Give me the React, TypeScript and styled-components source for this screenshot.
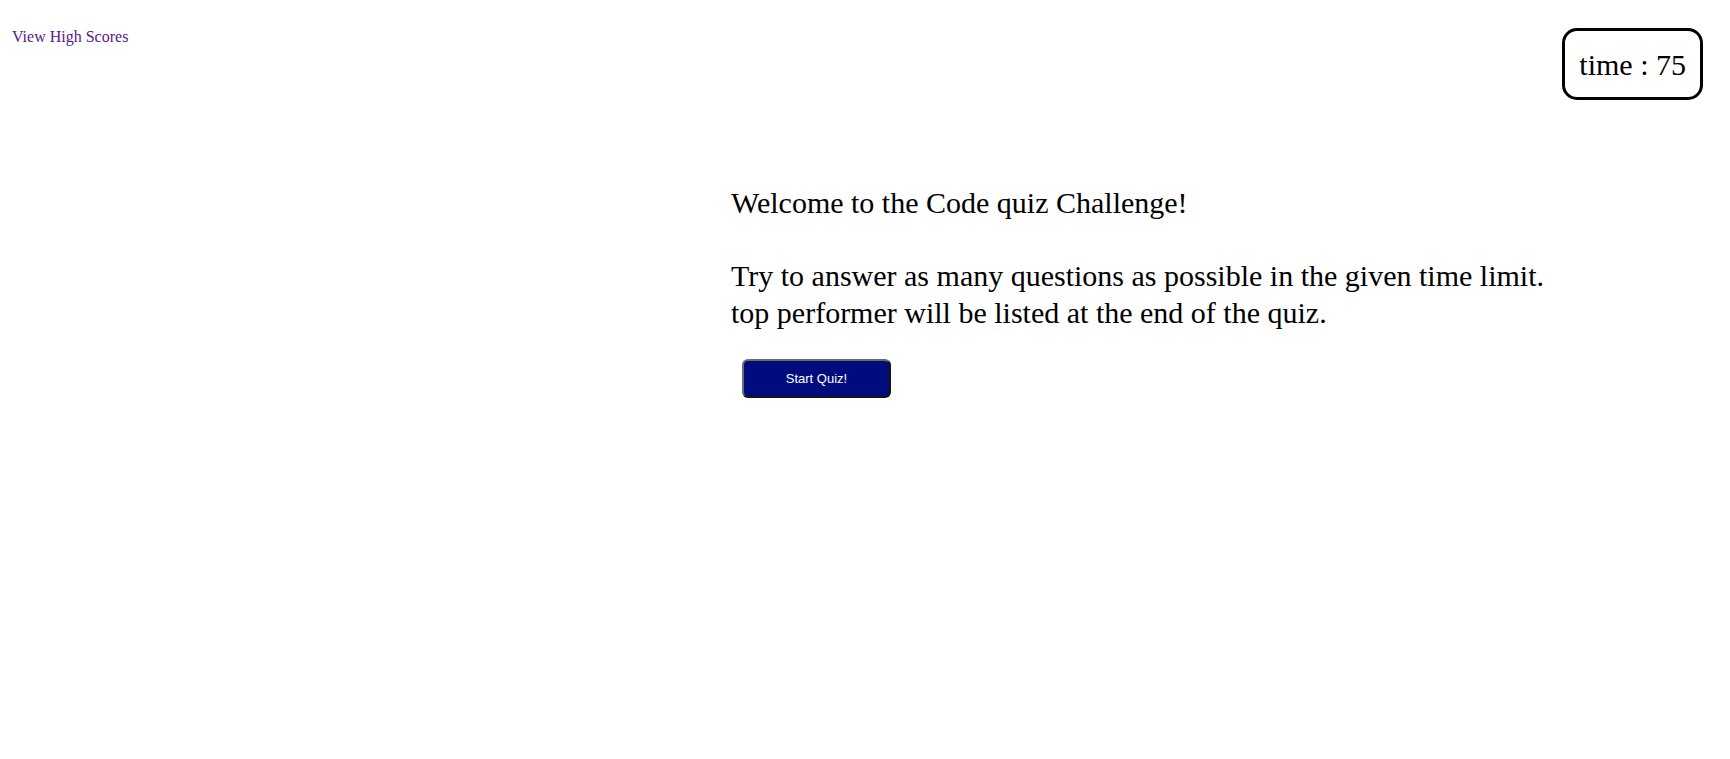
import React from "react";
import styled, { createGlobalStyle } from "styled-components";

const GlobalStyle = createGlobalStyle`
  html, body {
    margin: 0;
    padding: 0;
    background: #ffffff;
  }
  body {
    margin: 8px;
    font-family: "Liberation Serif", "Times New Roman", serif;
    color: #000000;
  }
`;

const Header = styled.header`
  display: flex;
  justify-content: space-between;
  align-items: flex-start;
  padding: 20px 19px 0 4px;
`;

const ScoresLink = styled.a`
  font-family: "Liberation Serif", "Times New Roman", serif;
  font-size: 16px;
  color: #551a8b;
  text-decoration: none;
  cursor: pointer;
`;

const Timer = styled.div`
  border: 3px solid #000000;
  border-radius: 15px;
  padding: 14.5px 14px;
  font-size: 30px;
  line-height: 37px;
`;

const Main = styled.main`
  display: flex;
  flex-direction: column;
  align-items: flex-start;
  padding: 85px 0 0 723px;
`;

const Intro = styled.p`
  margin: 0;
  font-size: 30px;
  line-height: 36.5px;
`;

const StartButton = styled.button`
  margin: 28px 0 0 11px;
  width: 149px;
  height: 39px;
  background: #000c7e;
  color: #ffffff;
  font-family: "Liberation Sans", Arial, sans-serif;
  font-size: 13px;
  border: 2px outset #6a6a6a;
  border-radius: 6px;
  cursor: pointer;
`;

export default function App() {
  return (
    <>
      <GlobalStyle />
      <Header>
        <ScoresLink href="#">View High Scores</ScoresLink>
        <Timer>time : 75</Timer>
      </Header>
      <Main>
        <Intro>
          Welcome to the Code quiz Challenge!
          <br />
          <br />
          Try to answer as many questions as possible in the given time limit.
          <br />
          top performer will be listed at the end of the quiz.
        </Intro>
        <StartButton>Start Quiz!</StartButton>
      </Main>
    </>
  );
}
